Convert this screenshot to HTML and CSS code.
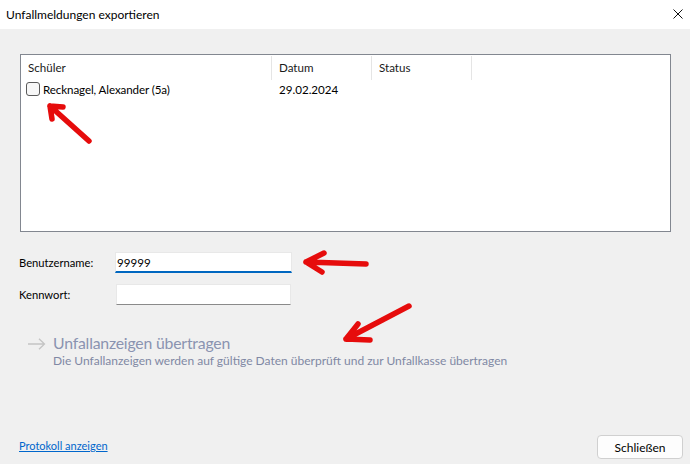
FILE: index.html
```html
<!DOCTYPE html>
<html lang="de">
<head>
<meta charset="utf-8">
<link rel="stylesheet" href="styles.css">
</head>
<body>
<div class="window">
  <div class="titlebar">
    <span class="title">Unfallmeldungen exportieren</span>
    <svg class="close" width="10" height="10" viewBox="0 0 10 10"><path d="M0.5 0.5L9.5 9.5M9.5 0.5L0.5 9.5" stroke="#111" stroke-width="1"/></svg>
  </div>
  <div class="content">
    <div class="listbox">
      <div class="lv-header">
        <div class="col c1">Schüler</div>
        <div class="col c2">Datum</div>
        <div class="col c3">Status</div>
        <div class="col c4"></div>
      </div>
      <div class="lv-row">
        <div class="cell c1"><span class="checkbox"></span>Recknagel, Alexander (5a)</div>
        <div class="cell c2">29.02.2024</div>
        <div class="cell c3"></div>
      </div>
    </div>
    <div class="form">
      <div class="frow">
        <label class="flabel">Benutzername:</label>
        <div class="input focused">99999</div>
      </div>
      <div class="frow">
        <label class="flabel">Kennwort:</label>
        <div class="input"></div>
      </div>
    </div>
    <div class="action">
      <svg class="act-arrow" width="18" height="12" viewBox="0 0 18 12"><path d="M0 6H16.5M11 0.8L16.5 6L11 11.2" stroke="#c4c4c4" stroke-width="1.3" fill="none"/></svg>
      <div class="act-text">
        <div class="act-title">Unfallanzeigen übertragen</div>
        <div class="act-sub">Die Unfallanzeigen werden auf gültige Daten überprüft und zur Unfallkasse übertragen</div>
      </div>
    </div>
    <div class="spacer"></div>
    <div class="footer">
      <a class="link" href="#">Protokoll anzeigen</a>
      <button class="btn">Schließen</button>
    </div>
  </div>
  <svg class="annot" width="690" height="464" viewBox="0 0 690 464">
    <g stroke="#e60c0c" stroke-width="5.5" stroke-linecap="round" stroke-linejoin="round" fill="none">
      <path d="M89 141L50 106M50 106L63 107M50 106L52 119"/>
      <path d="M366 264L306 262M306 262L324 253M306 262L322 272"/>
      <path d="M409 306L346 339M346 339L358 324M346 339L370 340"/>
    </g>
  </svg>
</div>
</body>
</html>
```
FILE: styles.css
```css
* { box-sizing: border-box; }
html, body { margin: 0; padding: 0; }
body {
  width: 690px;
  height: 464px;
  overflow: hidden;
  font-family: Lato, "Noto Sans", sans-serif;
  font-size: 12px;
  color: #000;
  background: #f0f0f0;
}
.window {
  position: relative;
  width: 690px;
  height: 464px;
  display: flex;
  flex-direction: column;
}
.titlebar {
  height: 29px;
  background: #fff;
  display: flex;
  align-items: center;
  justify-content: space-between;
  padding: 0 7px 0 6px;
}
.title { font-size: 12px; color: #000; }
.close { display: block; margin-top: -2px; }
.content {
  flex: 1;
  display: flex;
  flex-direction: column;
  padding: 25px 7px 5px 20px;
}
.listbox {
  width: 651px;
  height: 178px;
  background: #fff;
  border: 1px solid #828790;
  font-size: 11.6px;
}
.lv-header {
  display: flex;
  height: 25px;
  padding-top: 1px;
}
.col {
  height: 24px;
  border-right: 1px solid #e5e5e5;
  padding: 5px 0 0 7px;
  color: #1a1a1a;
}
.c1 { width: 251px; }
.c2 { width: 100px; }
.c3 { width: 100px; }
.c4 { width: 0; border-right: none; }
.lv-row {
  display: flex;
  height: 18px;
  align-items: center;
}
.cell { padding-left: 7px; white-space: nowrap; display: flex; align-items: center; }
.cell.c1 { padding-left: 5px; letter-spacing: -0.1px; }
.checkbox {
  width: 14px;
  height: 14px;
  border: 1px solid #5a5a5a;
  border-radius: 3px;
  background: #f7f7f7;
  margin-right: 3px;
  display: inline-block;
}
.form {
  margin-top: 20px;
  display: flex;
  flex-direction: column;
  gap: 12px;
}
.frow { display: flex; align-items: center; height: 20px; }
.flabel { width: 96px; margin-left: -1px; color: #000; font-size: 11.2px; }
.input {
  width: 177px;
  height: 21px;
  background: #fff;
  border: 1px solid #e8e8e8;
  border-bottom: 1px solid #8a8a8a;
  padding: 1px 0 0 1px;
  line-height: 17px;
  font-size: 11.6px;
}
.input.focused {
  border-bottom: 2px solid #0067c0;
}
.frow:nth-child(2) .input { margin-left: 1px; width: 175px; }
.action {
  margin-top: 28px;
  display: flex;
  align-items: flex-start;
  padding-left: 8px;
}
.act-arrow {
  display: block;
  width: 18px;
  margin-top: 6px;
  margin-right: 7px;
}
.act-title {
  font-size: 15.8px;
  letter-spacing: -0.2px;
  line-height: 21px;
  color: #8a93b0;
}
.act-sub {
  font-size: 12px;
  line-height: 16px;
  color: #8088a4;
}
.spacer { flex: 1; }
.footer {
  display: flex;
  align-items: center;
  justify-content: space-between;
  margin-left: -1px;
  height: 24px;
}
.link {
  color: #0066cc;
  text-decoration: underline;
  font-size: 11px;
  margin-top: -3px;
}
.btn {
  width: 86px;
  height: 24px;
  background: #fdfdfd;
  border: 1px solid #d0d0d0;
  border-radius: 4px;
  font-family: inherit;
  font-size: 12px;
  color: #000;
  padding: 0;
}
.annot {
  position: absolute;
  left: 0;
  top: 0;
  pointer-events: none;
}
```
